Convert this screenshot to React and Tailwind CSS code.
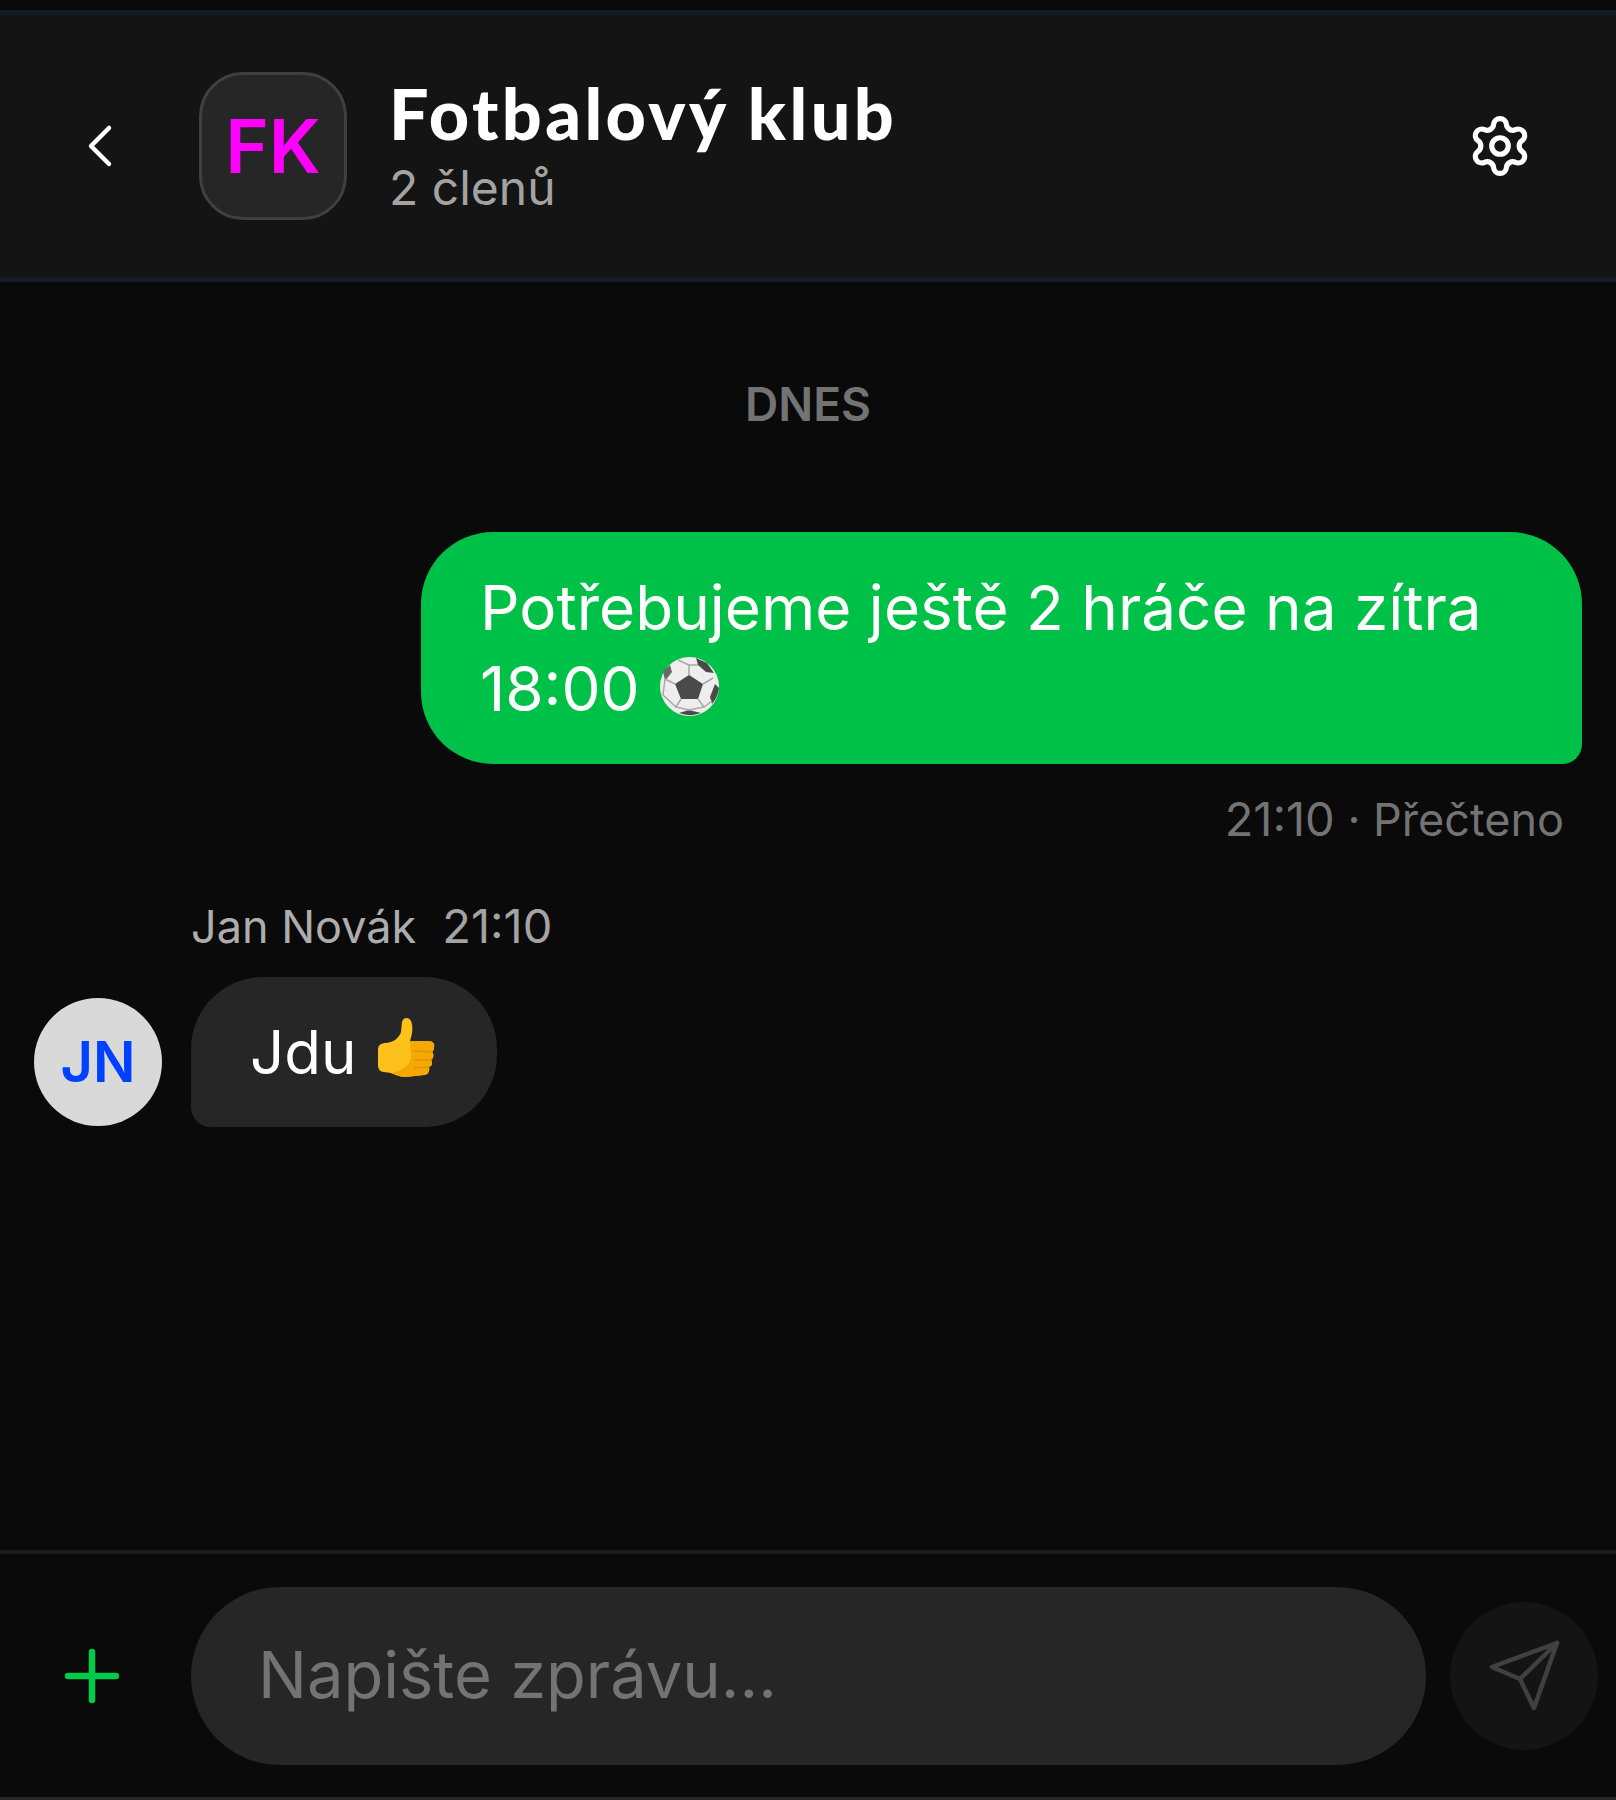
import React from "react";
import { ChevronLeft, Settings, Plus } from "lucide-react";

function SoccerBall() {
  return (
    <svg width="59" height="59" viewBox="0 0 59 59" className="inline-block shrink-0 mb-[5px]">
      <circle cx="29.5" cy="29.5" r="29.5" fill="#eeeeee" />
      <path d="M36 1 L47 6 L54 16 L46 15 L38 8Z" fill="#4a4a4a" />
      <path d="M29 18 L43 27 L38 42 L21 42 L15 27Z" fill="#4a4a4a" />
      <path d="M55 27 L59 31 A30 30 0 0 1 52 47 L50 40Z" fill="#4a4a4a" />
      <path d="M3 14 L10 8 L12 15 L5 24Z" fill="#6a6a6a" />
      <path d="M19 56 L29 53 L41 56 A30 30 0 0 1 19 56Z" fill="#4a4a4a" />
      <path d="M29 18 L29 8 M43 27 L53 21 M38 42 L44 50 L29 53 L16 50 L21 42 M15 27 L5 22 M5 22 L3 38 L16 50 M44 50 L52 44 M29 8 L18 3 M29 8 L38 8" stroke="#a8a8a8" strokeWidth="1.5" fill="none" />
    </svg>
  );
}

function ThumbsUp() {
  return (
    <svg width="59" height="61" viewBox="0 0 59 61" className="inline-block shrink-0 mb-[9px]">
      <path
        d="M2 33 C2 28 5 26 10 26 C18 25 23 21 25 15 L26 5 C27 0 33 0 35 4 C37 9 37 15 34 24 L52 24 C57 24 59 27 58 30 C58 33 57 34 56 35 C58 37 58 41 55 43 C57 46 56 49 53 50 C54 54 52 58 48 58 L30 60 C24 60 20 58 15 56 L8 55 C4 55 2 52 2 48Z"
        fill="#fcc21b"
      />
      <path
        d="M34 24 L52 24 C57 24 59 27 58 30 C58 33 57 34 56 35 C58 37 58 41 55 43 C57 46 56 49 53 50 C54 54 52 58 48 58 L30 60 C24 60 20 58 15 56 C24 54 34 50 35 40Z"
        fill="#f5a800"
      />
      <path d="M38 34 L56 35 M38 43 L55 43 M38 51 L53 50" stroke="#e09400" strokeWidth="1.5" fill="none" />
    </svg>
  );
}

export default function App() {
  return (
    <div className="w-full h-[1800px] flex flex-col bg-[#0a0a0a] font-[Inter,sans-serif] overflow-hidden">
      {/* header */}
      <div className="mt-[10px] h-[272px] shrink-0 flex items-center pl-[64px] pr-[83px] bg-[#141414] border-y-[5px] border-[#161c26]">
        <ChevronLeft size={72} strokeWidth={1.5} className="text-white shrink-0" />
        <div className="ml-[63px] w-[148px] h-[148px] shrink-0 flex items-center justify-center rounded-[44px] bg-[#262626] border-[3px] border-[#404040]">
          <span className="text-[#ff00ff] text-[74px] font-semibold leading-none">FK</span>
        </div>
        <div className="ml-[42px] flex-1 flex flex-col gap-[8px]">
          <div className="text-white text-[70px] font-black leading-[76px] tracking-[3.4px] font-[Lato,sans-serif]">Fotbalový klub</div>
          <div className="text-[#a3a3a3] text-[48px] leading-[58px]">2 členů</div>
        </div>
        <Settings size={66} strokeWidth={1.9} className="text-white shrink-0" />
      </div>

      {/* messages */}
      <div className="flex-1 flex flex-col">
        <div className="mt-[95px] text-center text-[#737373] text-[46px] font-semibold leading-[54px]">DNES</div>

        <div className="mt-[101px] self-end mr-[34px] w-[1161px] px-[59px] py-[35px] rounded-[72px] rounded-br-[20px] bg-[#00c147] text-white text-[62px] leading-[81px]">
          <div>Potřebujeme ještě 2 hráče na zítra</div>
          <div className="flex items-center gap-[20px]">
            18:00 <SoccerBall />
          </div>
        </div>
        <div className="mt-[28px] self-end mr-[52px] text-[#737373] text-[45px] leading-[54px]">
          <span className="text-[47px]">21:10</span> · Přečteno
        </div>

        <div className="mt-[52px] ml-[191px] flex items-baseline gap-[26px] text-[45px] leading-[54px]">
          <span className="text-[#adadad]">Jan Novák</span>
          <span className="text-[#a3a3a3] text-[47px]">21:10</span>
        </div>
        <div className="mt-[23px] ml-[34px] flex items-start gap-[29px]">
          <div className="w-[128px] h-[128px] shrink-0 mt-[21px] flex items-center justify-center rounded-full bg-[#d9d9d9]">
            <span className="text-[#0040ff] text-[56px] font-semibold leading-none">JN</span>
          </div>
          <div className="flex items-center gap-[20px] pl-[59px] pr-[62px] py-[35px] rounded-[72px] rounded-bl-[20px] bg-[#262626] text-white text-[60px] leading-[80px]">
            Jdu <ThumbsUp />
          </div>
        </div>
      </div>

      {/* composer */}
      <div className="h-[250px] shrink-0 flex items-center pl-[51px] pr-[18px] border-t-[4px] border-b-[3px] border-t-[#161c26] border-b-[#262626]">
        <Plus size={82} strokeWidth={1.9} className="text-[#00cc4a] shrink-0" />
        <input
          placeholder="Napište zprávu..."
          className="ml-[58px] w-[1235px] h-[178px] px-[67px] pb-[3px] rounded-full bg-[#262626] text-white text-[65px] outline-none placeholder:text-[#737373]"
        />
        <button className="ml-[24px] w-[148px] h-[148px] shrink-0 flex items-center justify-center rounded-full bg-[#141414]">
          <svg width="72" height="72" viewBox="0 0 72 72" fill="none" stroke="#404040" strokeWidth="4.5" strokeLinejoin="round" strokeLinecap="round">
            <path d="M69 3 L4 27 L32 39 L46 68 Z" />
            <path d="M69 3 L32 39" />
          </svg>
        </button>
      </div>
    </div>
  );
}
